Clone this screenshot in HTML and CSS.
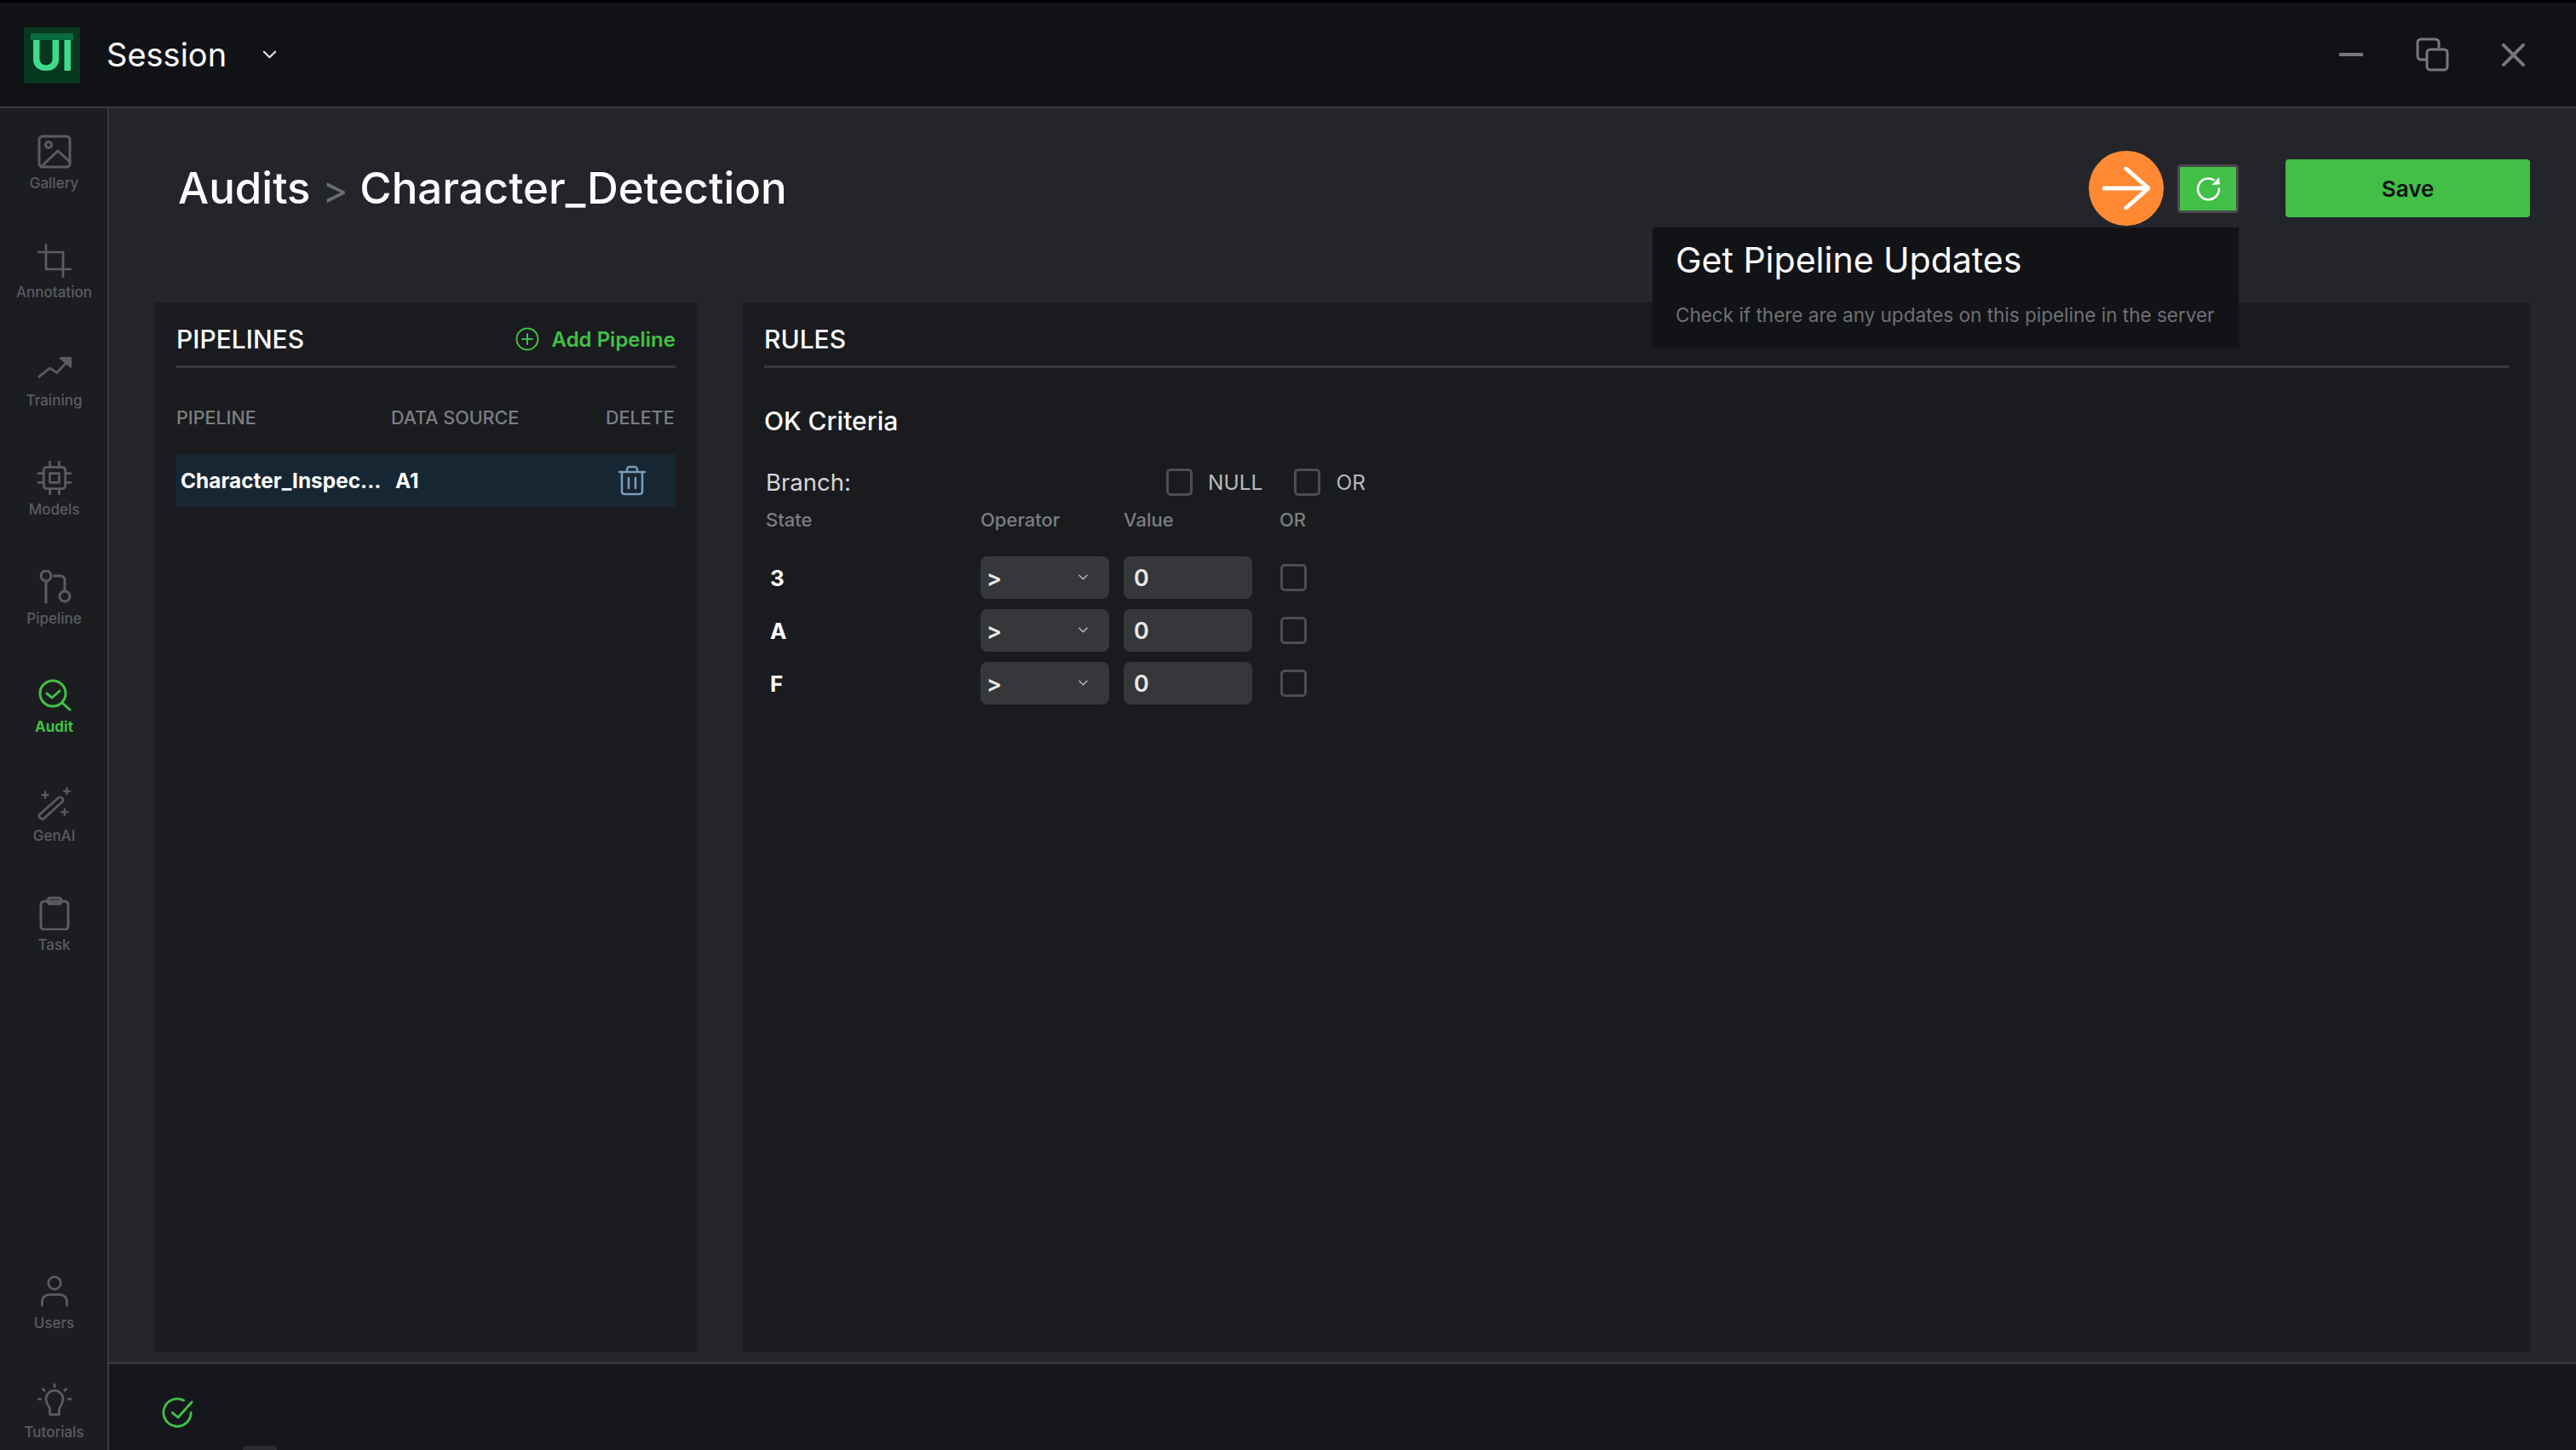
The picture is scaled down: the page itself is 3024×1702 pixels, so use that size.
FILE: index.html
```html
<!DOCTYPE html>
<html lang="en">
<head>
    <meta charset="UTF-8">
    <meta name="viewport" content="width=device-width, initial-scale=1.0">
    <title>Session - Audits</title>
    <link rel="stylesheet" href="styles.css">
</head>
<body>
<header class="topbar">
    <div class="logo"><span class="logo-bars"></span><span class="logo-text">UI</span></div>
    <span class="session-name">Session</span>
    <svg class="session-caret" viewBox="0 0 20 12"><path d="M2 2l8 8 8-8"/></svg>
    <div class="window-btns">
        <svg class="win-min" viewBox="0 0 28 4"><path d="M1 2h26"/></svg>
        <svg class="win-max" viewBox="0 0 40 40"><path d="M12 26H7a4 4 0 0 1-4-4V6a4 4 0 0 1 4-4h17a4 4 0 0 1 4 4v5"/><rect x="14" y="14" width="24" height="24" rx="4"/></svg>
        <svg class="win-close" viewBox="0 0 28 28"><path d="M2 2l24 24M26 2L2 26"/></svg>
    </div>
</header>

<div class="app">
    <nav class="sidebar">
        <a class="nav-item">
            <svg viewBox="0 0 40 40"><rect x="2" y="2" width="36" height="36" rx="4"/><circle cx="13" cy="12" r="3.5"/><path d="M5 37l19-18 14 13"/></svg>
            <span>Gallery</span>
        </a>
        <a class="nav-item">
            <svg viewBox="0 0 44 44"><path d="M11 1v32h32M1 11h32v32"/></svg>
            <span>Annotation</span>
        </a>
        <a class="nav-item">
            <svg viewBox="0 0 44 40"><path d="M2 30l14-11 9 6 16-17"/><path d="M30 6h13v11z" class="filled"/></svg>
            <span>Training</span>
        </a>
        <a class="nav-item">
            <svg viewBox="0 0 44 44"><rect x="8" y="8" width="28" height="28" rx="4"/><rect x="16" y="16" width="12" height="12"/><path d="M16 1v7M28 1v7M16 36v7M28 36v7M1 16h7M1 28h7M36 16h7M36 28h7"/></svg>
            <span>Models</span>
        </a>
        <a class="nav-item">
            <svg viewBox="0 0 40 40"><circle cx="10" cy="7" r="6"/><path d="M10 13v25"/><circle cx="32" cy="31" r="6"/><path d="M32 25V12a5 5 0 0 0-5-5h-7"/></svg>
            <span>Pipeline</span>
        </a>
        <a class="nav-item nav-active">
            <svg viewBox="0 0 40 40"><circle cx="18" cy="18" r="15"/><path d="M29 29l9 8M11 18l6 5 9-8"/></svg>
            <span>Audit</span>
        </a>
        <a class="nav-item">
            <svg viewBox="0 0 44 44"><path d="M4 40a3 3 0 0 1-1-5l25-22a4 4 0 0 1 5 5L9 40a3 3 0 0 1-5 0z"/><path d="M10 6v8M6 10h8M38 1v8M34 5h8M35 28v8M31 32h8" class="thin"/></svg>
            <span>GenAI</span>
        </a>
        <a class="nav-item">
            <svg viewBox="0 0 36 40"><rect x="2" y="6" width="32" height="33" rx="4"/><rect x="10" y="2" width="16" height="7" rx="3"/></svg>
            <span>Task</span>
        </a>
        <a class="nav-item nav-users">
            <svg viewBox="0 0 40 44"><circle cx="20" cy="11" r="8"/><path d="M4 40v-5a9 9 0 0 1 9-9h14a9 9 0 0 1 9 9v5"/></svg>
            <span>Users</span>
        </a>
        <a class="nav-item">
            <svg viewBox="0 0 44 44"><path d="M16 40v-7c0-3-5-6-5-13a11 11 0 0 1 22 0c0 7-5 10-5 13v7z"/><path d="M22 1v3M7 7l2 2M37 7l-2 2M1 20h3M40 20h3"/></svg>
            <span>Tutorials</span>
        </a>
    </nav>

    <div class="main">
        <div class="content">
            <div class="page-head">
                <h1 class="page-title">Audits <span class="crumb-sep">&gt;</span> Character_Detection</h1>
                <div class="page-actions">
                    <div class="refresh-wrap">
                        <!-- orange marker from the tutorial capture -->
                        <div class="marker">
                            <svg viewBox="0 0 56 50"><path d="M2 25h52M28 2l26 23-26 23"/></svg>
                        </div>
                        <button class="btn-refresh">
                            <svg viewBox="0 0 30 30"><path d="M21 5a12 12 0 1 0 6 10"/><path d="M19 11l9-1-1-8z" class="filled"/></svg>
                        </button>
                        <div class="tooltip">
                            <div class="tooltip-title">Get Pipeline Updates</div>
                            <div class="tooltip-text">Check if there are any updates on this pipeline in the server</div>
                        </div>
                    </div>
                    <button class="btn-save">Save</button>
                </div>
            </div>

            <div class="panels">
                <section class="panel panel-pipelines">
                    <div class="panel-head">
                        <h2>PIPELINES</h2>
                        <a class="add-link">
                            <svg viewBox="0 0 28 28"><circle cx="14" cy="14" r="12.5"/><path d="M14 8v12M8 14h12"/></svg>
                            Add Pipeline
                        </a>
                    </div>
                    <div class="pipe-cols">
                        <span>PIPELINE</span>
                        <span>DATA SOURCE</span>
                        <span>DELETE</span>
                    </div>
                    <div class="pipe-row">
                        <span>Character_Inspec...</span>
                        <span>A1</span>
                        <svg class="trash" viewBox="0 0 32 36"><path d="M1 8h30M10 8V5a3 3 0 0 1 3-3h6a3 3 0 0 1 3 3v3M4 8v23a3 3 0 0 0 3 3h18a3 3 0 0 0 3-3V8M12 15v12M20 15v12"/></svg>
                    </div>
                </section>

                <section class="panel panel-rules">
                    <div class="panel-head">
                        <h2>RULES</h2>
                    </div>
                    <h3 class="rules-title">OK Criteria</h3>
                    <div class="branch-row">
                        <span class="branch-label">Branch:</span>
                        <span class="check"></span><span class="check-label">NULL</span>
                        <span class="check"></span><span class="check-label">OR</span>
                    </div>
                    <div class="rule-grid rule-cols">
                        <span class="col-state">State</span>
                        <span>Operator</span>
                        <span>Value</span>
                        <span class="col-or">OR</span>
                    </div>
                    <div class="rule-grid rule-row">
                        <span class="state">3</span>
                        <div class="op-select">&gt;<svg viewBox="0 0 12 8"><path d="M1 1l5 5 5-5"/></svg></div>
                        <input class="value-input" type="text" value="0">
                        <span class="check check-or"></span>
                    </div>
                    <div class="rule-grid rule-row">
                        <span class="state">A</span>
                        <div class="op-select">&gt;<svg viewBox="0 0 12 8"><path d="M1 1l5 5 5-5"/></svg></div>
                        <input class="value-input" type="text" value="0">
                        <span class="check check-or"></span>
                    </div>
                    <div class="rule-grid rule-row">
                        <span class="state">F</span>
                        <div class="op-select">&gt;<svg viewBox="0 0 12 8"><path d="M1 1l5 5 5-5"/></svg></div>
                        <input class="value-input" type="text" value="0">
                        <span class="check check-or"></span>
                    </div>
                </section>
            </div>
        </div>

        <footer class="statusbar">
            <svg class="status-ok" viewBox="0 0 40 40"><path d="M36 19a17 17 0 1 1-9-15"/><path d="M13 19l7 6L37 6"/></svg>
            <span class="status-arc"></span>
        </footer>
    </div>
</div>
</body>
</html>
```

FILE: styles.css
```css
* {
    box-sizing: border-box;
}

html, body {
    height: 100%;
}

body {
    margin: 0;
    display: flex;
    flex-direction: column;
    height: 1702px;
    overflow: hidden;
    font-family: Inter, "Liberation Sans", sans-serif;
    background-color: #23252a;
    color: #ffffff;
}

svg {
    display: block;
    fill: none;
    stroke: currentColor;
    stroke-linecap: round;
    stroke-linejoin: round;
}

/* top bar */
.topbar {
    flex: 0 0 127px;
    display: flex;
    align-items: center;
    padding: 0 60px 0 28px;
    background-color: #111216;
    border-top: 3px solid #000000;
    border-bottom: 2px solid #3a3b3f;
}

.logo {
    position: relative;
    width: 66px;
    height: 66px;
    margin-top: 1px;
    border-radius: 3px;
    background-color: #06371f;
    overflow: hidden;
    display: flex;
    align-items: center;
    justify-content: center;
}

.logo-bars {
    position: absolute;
    left: 8px;
    top: 7px;
    width: 50px;
    height: 8px;
    background-color: #0b6a3c;
}

.logo-text {
    position: relative;
    font-size: 50px;
    font-weight: 700;
    line-height: 1;
    color: #3ddc8b;
}

.session-name {
    margin-left: 31px;
    font-size: 38px;
    line-height: 48px;
}

.session-caret {
    width: 17px;
    height: 10px;
    margin-left: 42px;
    color: #e2e2e2;
    stroke-width: 2.6;
}

.window-btns {
    margin-left: auto;
    display: flex;
    align-items: center;
    color: #77787b;
}

.win-min {
    width: 28px;
    height: 4px;
    stroke-width: 4;
}

.win-max {
    width: 40px;
    height: 40px;
    margin-left: 61px;
    stroke-width: 3;
}

.win-close {
    width: 27px;
    height: 27px;
    margin-left: 62px;
    stroke-width: 4;
}

/* app body */
.app {
    flex: 1;
    display: flex;
    min-height: 0;
}

.sidebar {
    flex: 0 0 128px;
    display: flex;
    flex-direction: column;
    gap: 60.7px;
    padding: 31px 0 11px 1px;
    background-color: #1c1d21;
    border-right: 2px solid #3a3b3f;
}

.nav-item {
    display: flex;
    flex-direction: column;
    align-items: center;
    height: 67px;
    color: #5b5c60;
    font-size: 17px;
    line-height: 20px;
    font-weight: 500;
}

.nav-item svg {
    width: 40px;
    height: 40px;
    margin-bottom: 7px;
    stroke-width: 3;
}

.nav-item .filled {
    fill: currentColor;
}

.nav-item .thin {
    stroke-width: 2.5;
}

.nav-active {
    color: #3fc145;
    font-weight: 700;
}

.nav-users {
    margin-top: auto;
}

.main {
    flex: 1;
    display: flex;
    flex-direction: column;
    min-width: 0;
}

.content {
    flex: 1;
    display: flex;
    flex-direction: column;
    padding: 0 54px 12px;
    min-height: 0;
}

.page-head {
    flex: 0 0 228px;
    display: flex;
    justify-content: space-between;
    padding: 60px 0 0 27px;
}

.page-title {
    margin: 0;
    font-size: 51px;
    line-height: 68px;
    font-weight: 500;
}

.crumb-sep {
    color: #6c6d70;
    font-size: 46px;
    font-weight: 400;
}

.page-actions {
    display: flex;
    align-items: center;
    align-self: flex-start;
    gap: 55px;
}

.refresh-wrap {
    position: relative;
}

.marker {
    position: absolute;
    right: 88px;
    top: -16px;
    width: 88px;
    height: 88px;
    border-radius: 50%;
    background-color: #ff8a33;
    color: #ffffff;
    display: flex;
    align-items: center;
    justify-content: center;
}

.marker svg {
    width: 56px;
    height: 50px;
    stroke-width: 5;
}

.btn-refresh {
    display: flex;
    align-items: center;
    justify-content: center;
    width: 72px;
    height: 57px;
    padding: 0;
    border: 3px solid #4b4c50;
    border-radius: 4px;
    background-color: #41bf47;
    color: #ffffff;
}

.btn-refresh svg {
    width: 31px;
    height: 31px;
    stroke-width: 2.5;
}

.btn-refresh .filled {
    fill: currentColor;
    stroke: none;
}

.tooltip {
    position: absolute;
    right: 0;
    top: 74px;
    width: 688px;
    height: 141px;
    padding: 14px 27px;
    background-color: #121317;
    z-index: 10;
}

.tooltip-title {
    font-size: 41px;
    line-height: 48px;
}

.tooltip-text {
    margin-top: 27px;
    font-size: 22.5px;
    line-height: 28px;
    color: #6f7074;
}

.btn-save {
    width: 287px;
    height: 68px;
    padding: 0;
    border: none;
    border-radius: 4px;
    background-color: #41bf47;
    color: #101114;
    font-family: inherit;
    font-size: 26px;
    font-weight: 600;
}

/* panels */
.panels {
    flex: 1;
    display: flex;
    gap: 54px;
    min-height: 0;
}

.panel {
    background-color: #1a1b1f;
    padding: 0 25px;
}

.panel-pipelines {
    flex: 0 0 636px;
}

.panel-rules {
    flex: 1;
}

.panel-head {
    display: flex;
    align-items: center;
    justify-content: space-between;
    padding: 23px 0 11px;
    border-bottom: 3px solid #38393c;
}

.panel-head h2 {
    margin: 0;
    font-size: 30px;
    line-height: 40px;
    font-weight: 500;
}

.add-link {
    display: flex;
    align-items: center;
    gap: 15px;
    color: #3fc145;
    font-size: 24px;
    font-weight: 600;
}

.add-link svg {
    width: 28px;
    height: 28px;
    stroke-width: 2;
}

.pipe-cols, .pipe-row {
    display: grid;
    grid-template-columns: 252px 1fr 82px;
    align-items: center;
}

.pipe-cols {
    margin-top: 46px;
    font-size: 21.5px;
    line-height: 24px;
    font-weight: 500;
    color: #7d7e82;
}

.pipe-row {
    margin-top: 31px;
    height: 62px;
    padding-left: 5px;
    background-color: #172633;
    font-size: 24.4px;
    font-weight: 700;
}

.trash {
    width: 32px;
    height: 36px;
    margin-left: 15px;
    color: #7c9cb9;
    stroke-width: 2.5;
}

.rules-title {
    margin: 42px 0 0;
    font-size: 30px;
    line-height: 40px;
    font-weight: 500;
}

.branch-row {
    display: flex;
    align-items: center;
    height: 40px;
    margin-top: 32px;
}

.branch-label {
    flex: 0 0 472px;
    padding-left: 2px;
    font-size: 27.5px;
    color: #d6d6d6;
}

.check {
    flex: none;
    display: block;
    width: 31px;
    height: 32px;
    border: 3px solid #4c4d50;
    border-radius: 5px;
}

.check-label {
    margin: 0 37px 0 18px;
    font-size: 24.5px;
    color: #b9b9bb;
}

.rule-grid {
    display: grid;
    grid-template-columns: 237px 151px 151px auto;
    column-gap: 17px;
    align-items: center;
}

.rule-cols {
    margin: 12px 0 31px;
    font-size: 22px;
    line-height: 24px;
    font-weight: 500;
    color: #7d7e82;
}

.col-state {
    padding-left: 2px;
}

.col-or {
    padding-left: 15px;
}

.rule-row {
    height: 50px;
    margin-bottom: 12px;
}

.state {
    padding-left: 7px;
    font-size: 26px;
    font-weight: 700;
}

.op-select, .value-input {
    width: 151px;
    height: 50px;
    border: none;
    border-radius: 8px;
    background-color: #36373b;
    color: #e8e8e8;
    font-family: inherit;
    font-size: 27px;
    font-weight: 600;
}

.op-select {
    display: flex;
    align-items: center;
    justify-content: space-between;
    padding: 0 25px 0 7px;
}

.op-select svg {
    width: 11px;
    height: 8px;
    stroke-width: 1.6;
    color: #b8b8ba;
}

.value-input {
    padding: 0 12px;
}

.check-or {
    margin-left: 16px;
}

/* status bar */
.statusbar {
    position: relative;
    flex: 0 0 103px;
    display: flex;
    align-items: center;
    padding: 14px 0 0 62px;
    background-color: #16171c;
    border-top: 2px solid #3a3b3f;
}

.status-ok {
    width: 38px;
    height: 38px;
    color: #3fc145;
    stroke-width: 3;
}

.status-arc {
    position: absolute;
    left: 157px;
    bottom: 0;
    width: 40px;
    height: 5px;
    border-radius: 20px 20px 0 0;
    background-color: #2c2c30;
}
```
